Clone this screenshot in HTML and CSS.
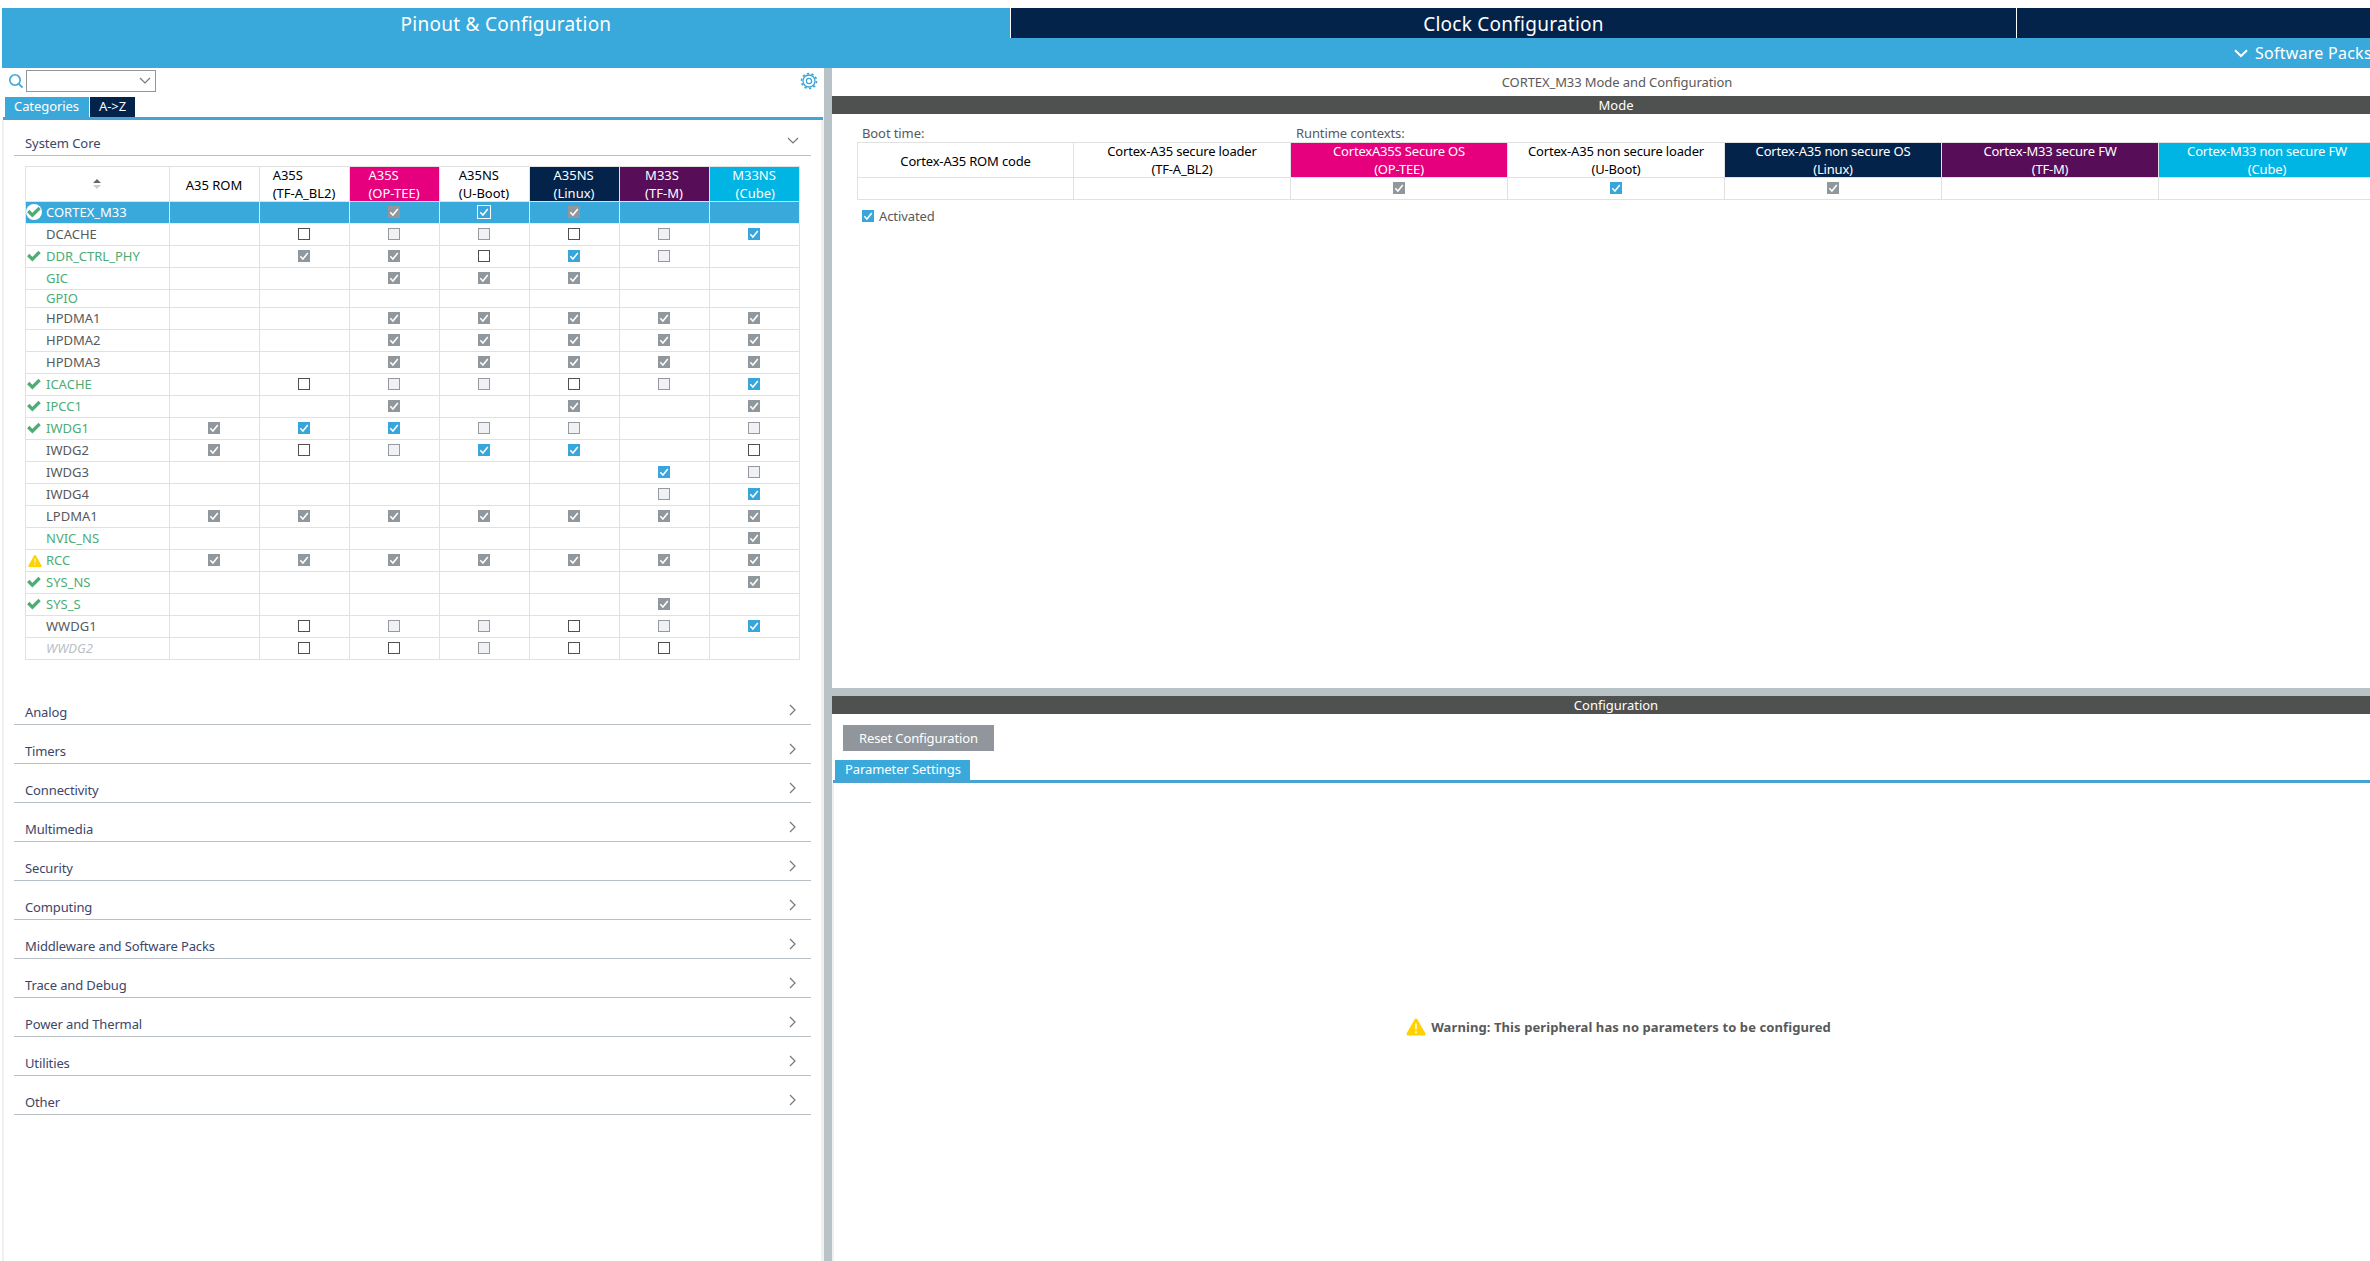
FILE: index.html
```html
<!DOCTYPE html>
<html lang="en">
<head>
    <meta charset="UTF-8">
    <title>Pinout &amp; Configuration</title>
    <link rel="stylesheet" href="styles.css">
</head>
<body>
    <svg class="sprite" width="0" height="0">
        <symbol id="tick" viewBox="0 0 12 12"><path d="M2.3 6.3 L4.9 9 L9.8 3" fill="none" stroke="#fff" stroke-width="1.5"/></symbol>
        <symbol id="ok" viewBox="0 0 16 16"><path d="M2.2 7 L6.4 11.2 L13.6 4" fill="none" stroke="#4eac74" stroke-width="3.2"/></symbol>
        <symbol id="warn" viewBox="0 0 20 18"><path d="M10 2 L18 16 H2 Z" fill="#ffd200" stroke="#ffd200" stroke-width="3" stroke-linejoin="round"/><path d="M10 5.5 V11.5 M10 13.3 V15.2" stroke="#fff" stroke-width="1.4"/></symbol>
        <symbol id="right" viewBox="0 0 8 12"><path d="M1 1 L6 6 L1 11" fill="none" stroke="#777" stroke-width="1.2"/></symbol>
        <symbol id="down" viewBox="0 0 12 8"><path d="M1 1 L6 6 L11 1" fill="none" stroke="#777" stroke-width="1.2"/></symbol>
    </svg>

    <header class="topbar">
        <nav class="main-tabs">
            <div class="main-tab active">Pinout &amp; Configuration</div>
            <div class="main-tab">Clock Configuration</div>
            <div class="main-tab"></div>
        </nav>
        <div class="sub-bar">
            <svg width="14" height="9" viewBox="0 0 14 9"><path d="M1 1.2 L7 7 L13 1.2" fill="none" stroke="#fff" stroke-width="2"/></svg>
            <span>Software Packs</span>
        </div>
    </header>

    <main class="workspace">
        <section class="left">
            <div class="search-row">
                <svg class="search-icon" width="16" height="16" viewBox="0 0 16 16"><circle cx="7" cy="7" r="5.2" fill="none" stroke="#39a6db" stroke-width="1.6"/><path d="M10.8 10.8 L14.6 14.6" stroke="#39a6db" stroke-width="1.8"/></svg>
                <div class="combo"><svg width="12" height="8"><use href="#down"/></svg></div>
                <svg class="gear" width="18" height="18" viewBox="0 0 18 18"><circle cx="9" cy="9" r="6" fill="none" stroke="#39a6db" stroke-width="1.3"/><circle cx="9" cy="9" r="7.5" fill="none" stroke="#39a6db" stroke-width="1.6" stroke-dasharray="2.36 2.35"/><circle cx="9" cy="9" r="2.6" fill="none" stroke="#39a6db" stroke-width="1.2"/></svg>
            </div>
            <div class="tabs">
                <div class="tab active">Categories</div>
                <div class="tab">A-&gt;Z</div>
            </div>
            <div class="categories">
                <div class="category open">System Core<svg width="12" height="8"><use href="#down"/></svg></div>
                <table class="ip-table">
                    <thead>
                        <tr>
                            <th class="name"><svg width="8" height="10" viewBox="0 0 8 10"><path d="M0 4 L4 0 L8 4 Z" fill="#666"/><path d="M0 6 L4 10 L8 6 Z" fill="#ccc"/></svg></th>
                            <th><div>A35 ROM</div></th>
                            <th><div>A35S<br>(TF-A_BL2)</div></th>
                            <th class="pink"><div>A35S<br>(OP-TEE)</div></th>
                            <th><div>A35NS<br>(U-Boot)</div></th>
                            <th class="navy"><div>A35NS<br>(Linux)</div></th>
                            <th class="purple"><div>M33S<br>(TF-M)</div></th>
                            <th class="cyan"><div>M33NS<br>&nbsp;(Cube)</div></th>
                        </tr>
                    </thead>
                    <tbody id="ipBody"></tbody>
                </table>
                <div id="closedCategories"></div>
            </div>
        </section>

        <section class="right">
            <div class="mode-pane">
                <div class="title">CORTEX_M33 Mode and Configuration</div>
                <div class="bar">Mode</div>
                <div class="mode-body">
                    <div class="context-labels"><span>Boot time:</span><span>Runtime contexts:</span></div>
                    <table class="context-table">
                        <thead>
                            <tr>
                                <th class="first"><div>Cortex-A35 ROM code</div></th>
                                <th><div>Cortex-A35 secure loader<br>(TF-A_BL2)</div></th>
                                <th class="pink"><div>CortexA35S Secure OS<br>(OP-TEE)</div></th>
                                <th><div>Cortex-A35 non secure loader<br>(U-Boot)</div></th>
                                <th class="navy"><div>Cortex-A35 non secure OS<br>(Linux)</div></th>
                                <th class="purple"><div>Cortex-M33 secure FW<br>(TF-M)</div></th>
                                <th class="cyan"><div>Cortex-M33 non secure FW<br>(Cube)</div></th>
                            </tr>
                        </thead>
                        <tbody>
                            <tr id="contextRow"></tr>
                        </tbody>
                    </table>
                    <div class="activated"><span class="cb on"><svg width="12" height="12"><use href="#tick"/></svg></span>Activated</div>
                </div>
            </div>
            <div class="config-pane">
                <div class="bar">Configuration</div>
                <div class="reset-row"><div class="reset">Reset Configuration</div></div>
                <div class="tabs">
                    <div class="tab active">Parameter Settings</div>
                </div>
                <div class="params">
                    <svg width="20" height="18"><use href="#warn"/></svg>
                    <b>Warning: This peripheral has no parameters to be configured</b>
                </div>
            </div>
        </section>
    </main>

    <script src="script.js"></script>
</body>
</html>
```
FILE: styles.css
```css
* {
    box-sizing: border-box;
}
body {
    margin: 0;
    padding: 8px 0 0 2px;
    height: 1261px;
    overflow: hidden;
    background: #fff;
    color: #58595b;
    font-family: "Noto Sans", sans-serif;
    font-size: 13px;
    line-height: 18px;
    white-space: nowrap;
}
svg {
    display: block;
    flex: none;
}
.sprite {
    position: absolute;
}

/* top bar */
.topbar {
    height: 60px;
    background: #39a9dc;
    color: #fff;
}
.main-tabs {
    display: grid;
    grid-template-columns: 1008px 1005px 1005px;
    gap: 1px;
    width: 2368px;
    height: 30px;
    overflow: hidden;
}
.main-tab {
    height: 30px;
    background: #03234b;
    font-size: 19px;
    letter-spacing: 0.25px;
    line-height: 33px;
    text-align: center;
    box-shadow: -1px 0 #fff;
}
.main-tab.active {
    background: #39a9dc;
    box-shadow: none;
}
.sub-bar {
    display: flex;
    align-items: center;
    gap: 7px;
    height: 30px;
    width: 2368px;
    padding-left: 2232px;
    overflow: hidden;
    font-size: 16px;
    letter-spacing: 0.25px;
    line-height: 32px;
}

.workspace {
    display: flex;
    height: 1193px;
}

/* left pane */
.left {
    display: flex;
    flex-direction: column;
    width: 822px;
    flex: none;
}
.search-row {
    display: flex;
    align-items: center;
    height: 29px;
    padding: 0 6px 3px 6px;
}
.combo {
    display: flex;
    align-items: center;
    justify-content: flex-end;
    width: 130px;
    height: 22px;
    margin-left: 2px;
    padding-right: 4px;
    border: 1px solid #90989e;
}
.gear {
    margin-left: auto;
}
.tabs {
    display: flex;
    gap: 1px;
    height: 23px;
    margin: 0 1px;
    padding-left: 2px;
    border-bottom: 3px solid #46a3d2;
}
.tab {
    height: 20px;
    padding: 0 9px;
    background: #03234b;
    color: #fff;
    letter-spacing: -0.08px;
}
.tab.active {
    width: 84px;
    background: #39a9dc;
}
.categories {
    flex: 1;
    padding: 9px 10px 0;
    border-left: 2px solid #f0f0f1;
    border-right: 3px solid #f0f0f1;
}
.category {
    display: flex;
    align-items: flex-end;
    justify-content: space-between;
    width: 797px;
    height: 39px;
    padding: 0 14px 3px 11px;
    border-bottom: 1px solid #b8c0c6;
    color: #3c4669;
    letter-spacing: -0.13px;
}
.category svg {
    margin-bottom: 5px;
}
.category.open {
    height: 27px;
    padding-right: 12px;
    letter-spacing: -0.05px;
}
.category.open svg {
    margin-bottom: 7px;
}

/* tables */
table {
    table-layout: fixed;
    border-spacing: 0;
    border: solid #e1e1e2;
    border-width: 1px 0 0 1px;
}
th, td {
    height: 22px;
    padding: 0;
    border: solid #e1e1e2;
    border-width: 0 1px 1px 0;
}
th {
    height: 35px;
    color: #000;
    font-weight: normal;
}
th div {
    display: inline-block;
    margin: -1px 0;
    text-align: left;
    vertical-align: middle;
}
th svg {
    margin: 0 auto;
}
.pink {
    background: #e6007e;
}
.navy {
    background: #03234b;
}
.purple {
    background: #570d57;
}
.cyan {
    background: #00b4e4;
}
.pink, .navy, .purple, .cyan {
    color: #fff;
}
.ip-table {
    width: 775px;
    margin: 10px 0 26px 11px;
}
.ip-table th {
    padding-right: 1px;
}
.ip-table .name {
    width: 144px;
    padding-right: 2px;
}
.name-cell {
    display: flex;
    align-items: center;
    gap: 4px;
    height: 17px;
    margin-top: -2px;
}
.icon {
    width: 16px;
    height: 16px;
}
.warn-icon {
    padding: 2px 0 0 2px;
}
.ready {
    color: #4eac74;
}
.unavailable {
    color: #b9c1c6;
    font-style: italic;
}
.short td {
    height: 18px;
}
.selected td {
    background: #39a9dc;
    color: #fff;
    border-color: #d5f0fb;
}
.selected .icon {
    border-radius: 50%;
    background: #fff;
}
.cb {
    display: block;
    width: 12px;
    height: 12px;
    margin: 0 auto;
    border: 1px solid #505050;
    background: #fff;
}
td .cb {
    position: relative;
    left: -0.5px;
    top: -0.5px;
}
.cb svg {
    margin: -1px;
}
.cb.disabled {
    border-color: #96999e;
    background: #eff1f4;
}
.cb.fixed {
    border-color: #90989e;
    background: #90989e;
}
.cb.on {
    border-color: #39a6db;
    background: #39a6db;
}
.cb.focus {
    width: 14px;
    height: 14px;
    border-color: #fff;
    background: #39a6db;
}
.cb.focus svg {
    margin: 0;
}

/* right pane */
.right {
    flex: none;
    width: 1576px;
    border-left: 8px solid #b7c3c6;
}
.title {
    height: 28px;
    padding: 5px 0 0 2px;
    letter-spacing: -0.09px;
    text-align: center;
}
.bar {
    height: 18px;
    background: #4f5150;
    color: #fff;
    text-align: center;
}
.mode-pane {
    height: 628px;
    border-bottom: 8px solid #b7c3c6;
}
.mode-body {
    padding: 10px 0 0 25px;
}
.context-labels {
    display: flex;
    padding-left: 5px;
    letter-spacing: -0.1px;
}
.context-labels span {
    width: 434px;
}
.context-table {
    width: 1519px;
}
.context-table .first {
    width: 216px;
}
.context-table th div {
    letter-spacing: -0.18px;
    text-align: center;
}
.activated {
    display: flex;
    align-items: center;
    gap: 5px;
    padding: 7px 0 0 5px;
    letter-spacing: -0.1px;
}
.activated .cb {
    margin: 0;
}
.config-pane {
    display: flex;
    flex-direction: column;
    height: 565px;
}
.reset-row {
    height: 46px;
    padding: 11px 0 0 11px;
}
.reset {
    width: 151px;
    height: 26px;
    background: #90969c;
    color: #fff;
    letter-spacing: -0.13px;
    line-height: 27px;
    text-align: center;
}
.config-pane .tab.active {
    width: 135px;
    padding-left: 10px;
}
.params {
    display: flex;
    align-items: center;
    justify-content: center;
    gap: 5px;
    flex: 1;
    padding: 10px 0 0 3px;
    border-left: 2px solid #f0f0f1;
    letter-spacing: 0.09px;
}
```
FILE: script.js
```js
// one letter per context: g = checked (fixed), b = checked, o = unchecked, d = disabled, s = checked on the selected row
const peripherals = [
    ['CORTEX_M33', 'ok', 'ready selected', '..gsg..'],
    ['DCACHE', '', '', '.oddodb'],
    ['DDR_CTRL_PHY', 'ok', 'ready', '.ggobd.'],
    ['GIC', '', 'ready', '..ggg..'],
    ['GPIO', '', 'ready short', '.......'],
    ['HPDMA1', '', '', '..ggggg'],
    ['HPDMA2', '', '', '..ggggg'],
    ['HPDMA3', '', '', '..ggggg'],
    ['ICACHE', 'ok', 'ready', '.oddodb'],
    ['IPCC1', 'ok', 'ready', '..g.g.g'],
    ['IWDG1', 'ok', 'ready', 'gbbdd.d'],
    ['IWDG2', '', '', 'godbb.o'],
    ['IWDG3', '', '', '.....bd'],
    ['IWDG4', '', '', '.....db'],
    ['LPDMA1', '', '', 'ggggggg'],
    ['NVIC_NS', '', 'ready', '......g'],
    ['RCC', 'warn', 'ready', 'ggggggg'],
    ['SYS_NS', 'ok', 'ready', '......g'],
    ['SYS_S', 'ok', 'ready', '.....g.'],
    ['WWDG1', '', '', '.oddodb'],
    ['WWDG2', '', 'unavailable', '.oodoo.']
];
const categories = ['Analog', 'Timers', 'Connectivity', 'Multimedia', 'Security', 'Computing',
    'Middleware and Software Packs', 'Trace and Debug', 'Power and Thermal', 'Utilities', 'Other'];

const boxClass = { g: 'fixed', b: 'on', s: 'focus', o: '', d: 'disabled' };

function cells(states) {
    return [...states].map(s => {
        if (s === '.') return '<td></td>';
        const tick = 'gbs'.includes(s) ? '<svg width="12" height="12"><use href="#tick"/></svg>' : '';
        return `<td><span class="cb ${boxClass[s]}">${tick}</span></td>`;
    }).join('');
}

document.getElementById('ipBody').innerHTML = peripherals.map(([name, icon, cls, states]) => {
    const use = icon ? `<use href="#${icon}"/>` : '';
    return `<tr class="${cls}"><td><div class="name-cell"><svg class="icon ${icon}-icon">${use}</svg>${name}</div></td>${cells(states)}</tr>`;
}).join('');

document.getElementById('contextRow').innerHTML = cells('..gbg..');

document.getElementById('closedCategories').innerHTML = categories.map(name =>
    `<div class="category">${name}<svg width="8" height="12"><use href="#right"/></svg></div>`
).join('');
```
